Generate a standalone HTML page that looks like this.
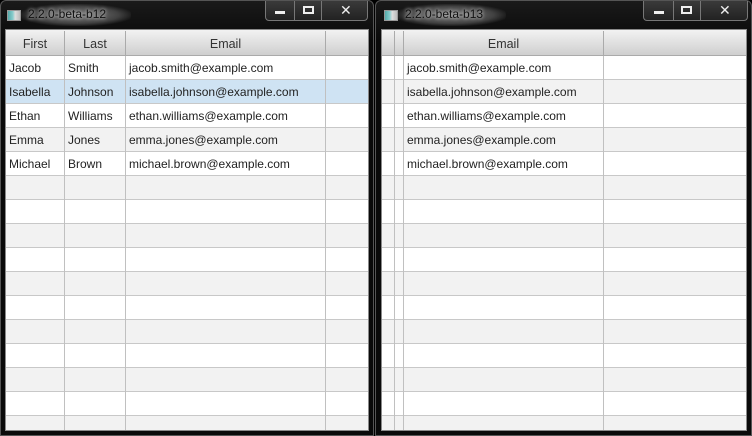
<!DOCTYPE html>
<html><head><meta charset="utf-8"><style>
*{margin:0;padding:0;box-sizing:border-box}
body{width:752px;height:436px;background:#000;position:relative;overflow:hidden;font-family:"Liberation Sans","DejaVu Sans",sans-serif}
.win{position:absolute;top:0;height:436px;background:linear-gradient(#1a1a1a,#0a0a0a 40px);border:1px solid #555;border-radius:6px 6px 0 0}
.glow{position:absolute;top:3px;left:20px;width:110px;height:22px;border-radius:11px;background:radial-gradient(ellipse at center,rgba(150,150,150,.85) 0%,rgba(110,110,110,.5) 55%,rgba(40,40,40,0) 75%)}
.title{position:absolute;top:6px;font-size:12px;color:#111;text-shadow:0 0 3px #bbb,0 0 5px #999}
.ico{position:absolute;top:9px;width:14px;height:11px;background:linear-gradient(90deg,#5aa 0,#8cc 40%,#ddd 60%,#bbb 100%);border:1px solid #999}
.btns{position:absolute;top:0;height:20px;border:1px solid #777;border-top:none;border-radius:0 0 4px 4px;background:linear-gradient(#3a3a3a,#222)}
.btns div{position:absolute;top:0;height:19px;border-left:1px solid #777}
.client{position:absolute;top:29px;height:402px;background:#fff;border:1px solid #8a8a8a;overflow:hidden}
.hdr{position:absolute;left:0;top:0;height:26px;right:0;background:linear-gradient(#f2f2f2,#cfcfcf);border-bottom:1px solid #aaa}
.hc{position:absolute;top:1px;height:25px;line-height:27px;text-align:center;font-size:12.5px;color:#333;border-right:1px solid #aaa}
.row{position:absolute;left:0;right:0;height:24px;border-bottom:1px solid #c8c8c8}
.vl{position:absolute;top:0;bottom:0;width:1px;background:#c0c0c0}
.t{position:absolute;font-size:12px;color:#222;line-height:25px}
</style></head><body>
<div class="win" style="left:0;width:374px">
 <div class="glow"></div>
 <div class="ico" style="left:6px"></div>
 <div class="title" style="left:27px">2.2.0-beta-b12</div>
 <div class="btns" style="left:264px;width:103px">
  <div style="left:28px"></div><div style="left:55px"></div>
  <span style="position:absolute;left:9px;top:10px;width:10px;height:3px;background:#eee"></span>
  <span style="position:absolute;left:37px;top:5px;width:11px;height:8px;border:2px solid #eee"></span>
  <span style="position:absolute;left:74px;top:1px;color:#eee;font-size:14px;font-weight:bold">✕</span>
 </div>
</div>
<div class="client" style="left:5px;width:364px">
 <div class="row" style="top:26px;background:#fff"></div>
 <div class="row" style="top:50px;background:#cfe3f3"></div>
 <div class="row" style="top:74px;background:#fff"></div>
 <div class="row" style="top:98px;background:#f2f2f2"></div>
 <div class="row" style="top:122px;background:#fff"></div>
 <div class="row" style="top:146px;background:#f2f2f2"></div>
 <div class="row" style="top:170px;background:#fff"></div>
 <div class="row" style="top:194px;background:#f2f2f2"></div>
 <div class="row" style="top:218px;background:#fff"></div>
 <div class="row" style="top:242px;background:#f2f2f2"></div>
 <div class="row" style="top:266px;background:#fff"></div>
 <div class="row" style="top:290px;background:#f2f2f2"></div>
 <div class="row" style="top:314px;background:#fff"></div>
 <div class="row" style="top:338px;background:#f2f2f2"></div>
 <div class="row" style="top:362px;background:#fff"></div>
 <div class="row" style="top:386px;background:#f2f2f2;border:none"></div>
 <div class="vl" style="left:58px"></div><div class="vl" style="left:119px"></div><div class="vl" style="left:319px"></div>
 <div class="hdr">
  <div class="hc" style="left:0;width:59px">First</div>
  <div class="hc" style="left:59px;width:61px">Last</div>
  <div class="hc" style="left:120px;width:200px">Email</div>
 </div>
 <div class="t" style="left:3px;top:26px">Jacob</div><div class="t" style="left:62px;top:26px">Smith</div><div class="t" style="left:123px;top:26px">jacob.smith@example.com</div>
 <div class="t" style="left:3px;top:50px">Isabella</div><div class="t" style="left:62px;top:50px">Johnson</div><div class="t" style="left:123px;top:50px">isabella.johnson@example.com</div>
 <div class="t" style="left:3px;top:74px">Ethan</div><div class="t" style="left:62px;top:74px">Williams</div><div class="t" style="left:123px;top:74px">ethan.williams@example.com</div>
 <div class="t" style="left:3px;top:98px">Emma</div><div class="t" style="left:62px;top:98px">Jones</div><div class="t" style="left:123px;top:98px">emma.jones@example.com</div>
 <div class="t" style="left:3px;top:122px">Michael</div><div class="t" style="left:62px;top:122px">Brown</div><div class="t" style="left:123px;top:122px">michael.brown@example.com</div>
</div>
<div class="win" style="left:375px;width:377px">
 <div class="glow"></div>
 <div class="ico" style="left:8px"></div>
 <div class="title" style="left:29px">2.2.0-beta-b13</div>
 <div class="btns" style="left:267px;width:105px">
  <div style="left:29px"></div><div style="left:56px"></div>
  <span style="position:absolute;left:10px;top:10px;width:10px;height:3px;background:#eee"></span>
  <span style="position:absolute;left:37px;top:5px;width:11px;height:8px;border:2px solid #eee"></span>
  <span style="position:absolute;left:75px;top:1px;color:#eee;font-size:14px;font-weight:bold">✕</span>
 </div>
</div>
<div class="client" style="left:381px;width:366px">
 <div class="row" style="top:26px;background:#fff"></div>
 <div class="row" style="top:50px;background:#f2f2f2"></div>
 <div class="row" style="top:74px;background:#fff"></div>
 <div class="row" style="top:98px;background:#f2f2f2"></div>
 <div class="row" style="top:122px;background:#fff"></div>
 <div class="row" style="top:146px;background:#f2f2f2"></div>
 <div class="row" style="top:170px;background:#fff"></div>
 <div class="row" style="top:194px;background:#f2f2f2"></div>
 <div class="row" style="top:218px;background:#fff"></div>
 <div class="row" style="top:242px;background:#f2f2f2"></div>
 <div class="row" style="top:266px;background:#fff"></div>
 <div class="row" style="top:290px;background:#f2f2f2"></div>
 <div class="row" style="top:314px;background:#fff"></div>
 <div class="row" style="top:338px;background:#f2f2f2"></div>
 <div class="row" style="top:362px;background:#fff"></div>
 <div class="row" style="top:386px;background:#f2f2f2;border:none"></div>
 <div class="vl" style="left:12px"></div><div class="vl" style="left:21px"></div><div class="vl" style="left:221px"></div>
 <div class="hdr">
  <div class="hc" style="left:0;width:13px"></div>
  <div class="hc" style="left:13px;width:9px"></div>
  <div class="hc" style="left:22px;width:200px">Email</div>
 </div>
 <div class="t" style="left:25px;top:26px">jacob.smith@example.com</div>
 <div class="t" style="left:25px;top:50px">isabella.johnson@example.com</div>
 <div class="t" style="left:25px;top:74px">ethan.williams@example.com</div>
 <div class="t" style="left:25px;top:98px">emma.jones@example.com</div>
 <div class="t" style="left:25px;top:122px">michael.brown@example.com</div>
</div>
</body></html>
